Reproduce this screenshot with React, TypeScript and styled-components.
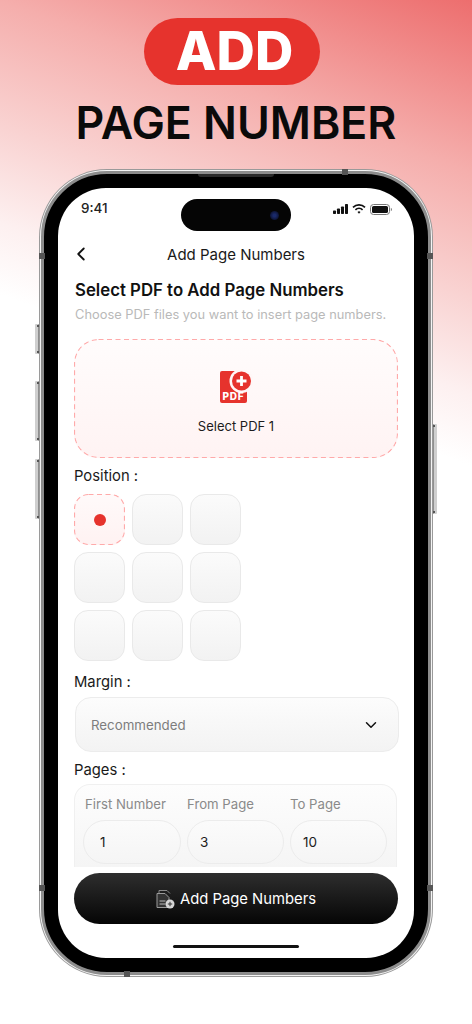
import styled, { createGlobalStyle } from "styled-components";
import { ChevronLeft, ChevronDown } from "lucide-react";

const GlobalStyle = createGlobalStyle`
  html, body {
    margin: 0;
    padding: 0;
    background: #fff;
  }
  * {
    box-sizing: border-box;
  }
`;

const FONT = `Inter, "Open Sans", sans-serif`;

const dashed = (radius: number) =>
  `url("data:image/svg+xml,%3Csvg xmlns='http://www.w3.org/2000/svg' width='100%25' height='100%25'%3E%3Crect x='.5' y='.5' width='calc(100%25 - 1px)' height='calc(100%25 - 1px)' rx='${radius}' fill='none' stroke='%23ffaaaa' stroke-width='1.2' stroke-dasharray='5 3.5'/%3E%3C/svg%3E")`;

const Page = styled.div`
  width: 472px;
  height: 1024px;
  overflow: hidden;
  display: flex;
  flex-direction: column;
  align-items: center;
  padding-top: 18px;
  font-family: ${FONT};
  color: #111;
  background: linear-gradient(200deg, #ed6e6e 0%, #f5aeac 14.4%, #f9d3d2 25%, #fdf0f0 33%, #ffffff 39%);
`;

const Pill = styled.div`
  width: 176px;
  height: 67px;
  margin-right: 8px;
  padding-left: 5px;
  border-radius: 34px;
  background: #e6332d;
  color: #fff;
  font-size: 53px;
  font-weight: 800;
  line-height: 67px;
  text-align: center;
`;

const Title = styled.h1`
  margin: 12px 0 0;
  font-size: 44.6px;
  line-height: 52px;
  font-weight: 600;
  color: #0a0a0a;
  white-space: nowrap;
`;

const Shell = styled.div`
  position: relative;
  flex: none;
  width: 390px;
  height: 804px;
  margin-top: 22px;
  padding: 14px;
  background: #000;
  border: 3px solid #8d8d8d;
  border-radius: 66px;
  box-shadow: 0 0 0 1px #f4f4f4, 0 0 0 2px #9a9a9a;
`;

const SideKey = styled.span<{ $side: "left" | "right"; $top: number; $h: number }>`
  position: absolute;
  ${(p) => p.$side}: -9px;
  top: ${(p) => p.$top}px;
  width: 4px;
  height: ${(p) => p.$h}px;
  background: #cfcfcf;
  border-radius: 1px;
  border-${(p) => (p.$side === "left" ? "right" : "left")}: 1px solid #8f8f8f;
  &::before,
  &::after {
    content: "";
    position: absolute;
    ${(p) => (p.$side === "left" ? "right: -1px" : "left: -1px")};
    width: 2px;
    height: 2px;
    background: #555;
  }
  &::before {
    top: 1px;
  }
  &::after {
    bottom: 1px;
  }
`;

const SideBand = styled.span<{ $side: "left" | "right"; $y: number }>`
  position: absolute;
  ${(p) => p.$side}: -5px;
  top: ${(p) => p.$y}px;
  width: 6px;
  height: 6px;
  background: #555;
`;

const EdgeBand = styled.span<{ $edge: "top" | "bottom"; $x: number }>`
  position: absolute;
  ${(p) => p.$edge}: -5px;
  left: ${(p) => p.$x}px;
  width: 6px;
  height: 6px;
  background: #555;
`;

const Speaker = styled.span`
  position: absolute;
  top: 0;
  left: 154px;
  width: 76px;
  height: 3px;
  border-radius: 0 0 3px 3px;
  background: #2b2b2b;
`;

const Screen = styled.div`
  position: relative;
  height: 100%;
  border-radius: 48px;
  background: #fff;
  overflow: hidden;
  padding: 0 16px;
`;

const StatusBar = styled.div`
  display: flex;
  align-items: flex-start;
  justify-content: space-between;
  height: 43px;
  padding: 11px 6px 0;
`;

const Time = styled.span`
  width: 60px;
  padding-left: 1px;
  font-size: 13.4px;
  line-height: 18px;
  font-weight: 500;
  color: #222;
`;

const Island = styled.div`
  width: 110px;
  height: 32px;
  border-radius: 16px;
  background: #050505;
  display: flex;
  align-items: center;
  justify-content: flex-end;
  padding-right: 12px;
`;

const Lens = styled.span`
  width: 9px;
  height: 9px;
  border-radius: 50%;
  background: radial-gradient(circle, #1a2a6a 20%, #0a0f28 80%);
`;

const StatusIcons = styled.div`
  width: 60px;
  display: flex;
  align-items: center;
  justify-content: flex-end;
  gap: 4px;
  height: 18px;
  margin-top: 1px;
`;

const NavBar = styled.div`
  position: relative;
  height: 26px;
  margin-top: 10px;
  display: flex;
  align-items: center;
  justify-content: center;
  font-size: 15px;
  color: #1a1a1a;
  svg {
    position: absolute;
    left: -4px;
    top: 2px;
  }
`;

const Heading = styled.h2`
  margin: 11px 0 0 1px;
  font-size: 16.8px;
  line-height: 24px;
  font-weight: 600;
  color: #111;
  white-space: nowrap;
`;

const Sub = styled.p`
  margin: 3px 0 0 1px;
  font-size: 12.85px;
  line-height: 20px;
  color: #b9b9b9;
  white-space: nowrap;
`;

const DropZone = styled.div`
  height: 119px;
  margin-top: 14px;
  border-radius: 24px;
  background: ${dashed(24)}, linear-gradient(180deg, #fffcfc, #fff3f3);
  display: flex;
  flex-direction: column;
  align-items: center;
  padding-top: 31px;
  font-size: 13px;
  color: #1c1c1c;
`;

const DropLabel = styled.span`
  margin-top: 12px;
  line-height: 20px;
`;

const FieldLabel = styled.div<{ $mt: number }>`
  margin-top: ${(p) => p.$mt}px;
  font-size: 14.8px;
  line-height: 20px;
  color: #1a1a1a;
`;

const PositionGrid = styled.div`
  display: grid;
  grid-template-columns: repeat(3, 51px);
  grid-auto-rows: 51px;
  gap: 7px;
  margin-top: 8px;
`;

const Cell = styled.div<{ $on?: boolean }>`
  border-radius: 14px;
  display: flex;
  align-items: center;
  justify-content: center;
  ${(p) =>
    p.$on
      ? `background: ${dashed(14)}, linear-gradient(180deg, #fffafa, #fff2f2);`
      : `border: 1px solid #e9e9e9; background: linear-gradient(180deg, #fbfbfb, #f2f2f2);`}
`;

const Dot = styled.span`
  width: 12px;
  height: 12px;
  border-radius: 50%;
  background: #e6332d;
`;

const Select = styled.div`
  height: 55px;
  margin: 5px -1px 0 1px;
  padding: 0 18px 0 15px;
  border: 1px solid #ececec;
  border-radius: 16px;
  background: linear-gradient(180deg, #fcfcfc, #f3f3f3);
  display: flex;
  align-items: center;
  justify-content: space-between;
  font-size: 13.3px;
  color: #7d7d7d;
`;

const PagesCard = styled.div`
  height: 83px;
  margin-top: 4px;
  margin-right: 1px;
  padding: 9px 8px 0;
  border: 1px solid #f0f0f0;
  border-bottom: none;
  border-radius: 16px 16px 0 0;
  background: linear-gradient(180deg, #fdfdfd, #f5f5f5);
  display: grid;
  grid-template-columns: 98px 97px 97px;
  column-gap: 6px;
`;

const PageField = styled.div`
  display: flex;
  flex-direction: column;
`;

const PageFieldLabel = styled.span<{ $indent: number }>`
  padding-left: ${(p) => p.$indent}px;
  font-size: 13.2px;
  line-height: 20px;
  color: #8a8a8a;
  white-space: nowrap;
`;

const PageInput = styled.div<{ $pad: number }>`
  height: 44px;
  margin-top: 6px;
  padding-left: ${(p) => p.$pad}px;
  border: 1px solid #ececec;
  border-radius: 22px;
  background: linear-gradient(180deg, #fbfbfb, #f5f5f5);
  display: flex;
  align-items: center;
  font-size: 13.5px;
  color: #1c1c1c;
`;

const ActionButton = styled.div`
  height: 51px;
  margin-top: 6px;
  border-radius: 26px;
  background: linear-gradient(180deg, #2e2e2e, #050505);
  display: flex;
  align-items: center;
  justify-content: center;
  gap: 5px;
  color: #fff;
  font-size: 14.8px;
`;

const HomeBar = styled.div`
  width: 126px;
  height: 3px;
  margin: 21px auto 0;
  border-radius: 2px;
  background: #111;
`;

const PdfIcon = () => (
  <svg width="34" height="34" viewBox="0 0 34 34">
    <rect x="1" y="1" width="27" height="32" rx="2" fill="#e6332d" />
    <circle cx="22.5" cy="11" r="12" fill="#fff7f7" />
    <circle cx="22.5" cy="11" r="9.5" fill="#e6332d" />
    <path d="M22.5 6v10M17.5 11h10" stroke="#fff" strokeWidth="2.8" />
    <text x="14.5" y="30" fill="#fff" fontSize="10" fontWeight="800" textAnchor="middle" fontFamily="Inter, sans-serif" letterSpacing="0.8">PDF</text>
  </svg>
);

const FileAddIcon = () => (
  <svg width="19" height="20" viewBox="0 0 19 20" fill="none">
    <path d="M3 4V1.5h8l3 3" stroke="#8a8a8a" strokeWidth="1" />
    <path d="M1 4.5h8l4 4v10H1z" fill="#333" stroke="#9a9a9a" strokeWidth="1" />
    <path d="M3.5 12h6M3.5 15h6" stroke="#bbb" strokeWidth="1" />
    <circle cx="14" cy="15" r="4.5" fill="#d6d6d6" />
    <path d="M14 12.8v4.4M11.8 15h4.4" stroke="#333" strokeWidth="1" />
  </svg>
);

const SignalIcon = () => (
  <svg width="15" height="10" viewBox="0 0 15 10" fill="#111">
    <rect x="0" y="6.5" width="3" height="3.5" rx="0.7" />
    <rect x="4" y="4.5" width="3" height="5.5" rx="0.7" />
    <rect x="8" y="2.5" width="3" height="7.5" rx="0.7" />
    <rect x="12" y="0" width="3" height="10" rx="0.7" />
  </svg>
);

const WifiIcon = () => (
  <svg width="14" height="10" viewBox="0 0 14 10" fill="none" stroke="#111" strokeWidth="1.7">
    <path d="M1 3.4a8.6 8.6 0 0 1 12 0" />
    <path d="M3.4 5.8a5.2 5.2 0 0 1 7.2 0" />
    <path d="M7 9.8 5.5 8a2.2 2.2 0 0 1 3 0z" fill="#111" stroke="none" />
  </svg>
);

const BatteryIcon = () => (
  <svg width="22" height="11" viewBox="0 0 22 11">
    <rect x="0.5" y="0.5" width="19" height="10" rx="3" fill="none" stroke="#777" />
    <rect x="2" y="2" width="16" height="7" rx="1.6" fill="#111" />
    <path d="M20.8 3.8c.7.3 1.2.9 1.2 1.7s-.5 1.4-1.2 1.7z" fill="#888" />
  </svg>
);

const pageFields = [
  { label: "First Number", value: "1", indent: 2, pad: 16 },
  { label: "From Page", value: "3", indent: 0, pad: 12 },
  { label: "To Page", value: "10", indent: 0, pad: 12 },
];

export default function App() {
  return (
    <Page>
      <GlobalStyle />
      <Pill>ADD</Pill>
      <Title>PAGE NUMBER</Title>
      <Shell>
        <SideKey $side="left" $top={150} $h={30} />
        <SideKey $side="left" $top={207} $h={60} />
        <SideKey $side="left" $top={285} $h={60} />
        <SideKey $side="right" $top={250} $h={90} />
        <SideBand $side="left" $y={79} />
        <SideBand $side="right" $y={79} />
        <SideBand $side="left" $y={711} />
        <SideBand $side="right" $y={711} />
        <EdgeBand $edge="top" $x={298} />
        <EdgeBand $edge="bottom" $x={80} />
        <Speaker />
        <Screen>
          <StatusBar>
            <Time>9:41</Time>
            <Island>
              <Lens />
            </Island>
            <StatusIcons>
              <SignalIcon />
              <WifiIcon />
              <BatteryIcon />
            </StatusIcons>
          </StatusBar>
          <NavBar>
            <ChevronLeft size={22} strokeWidth={2} color="#111" />
            Add Page Numbers
          </NavBar>
          <Heading>Select PDF to Add Page Numbers</Heading>
          <Sub>Choose PDF files you want to insert page numbers.</Sub>
          <DropZone>
            <PdfIcon />
            <DropLabel>Select PDF 1</DropLabel>
          </DropZone>
          <FieldLabel $mt={8}>Position :</FieldLabel>
          <PositionGrid>
            {Array.from({ length: 9 }, (_, i) => (
              <Cell key={i} $on={i === 0}>
                {i === 0 && <Dot />}
              </Cell>
            ))}
          </PositionGrid>
          <FieldLabel $mt={11}>Margin :</FieldLabel>
          <Select>
            Recommended
            <ChevronDown size={18} strokeWidth={2} color="#111" />
          </Select>
          <FieldLabel $mt={8}>Pages :</FieldLabel>
          <PagesCard>
            {pageFields.map((f) => (
              <PageField key={f.label}>
                <PageFieldLabel $indent={f.indent}>{f.label}</PageFieldLabel>
                <PageInput $pad={f.pad}>{f.value}</PageInput>
              </PageField>
            ))}
          </PagesCard>
          <ActionButton>
            <FileAddIcon />
            Add Page Numbers
          </ActionButton>
          <HomeBar />
        </Screen>
      </Shell>
    </Page>
  );
}
